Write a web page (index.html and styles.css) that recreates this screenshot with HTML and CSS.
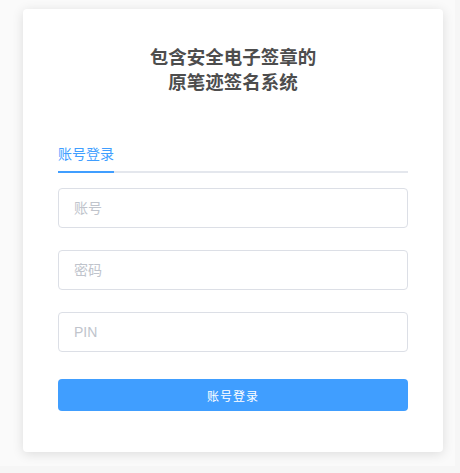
FILE: index.html
```html
<!DOCTYPE html>
<html lang="zh-CN">
<head>
    <meta charset="UTF-8">
    <meta name="viewport" content="width=device-width, initial-scale=1.0">
    <title>登录</title>
    <link rel="stylesheet" href="styles.css">
</head>
<body>
    <div class="page">
        <div class="login-card">
            <h1 class="login-title">包含安全电子签章的<br>原笔迹签名系统</h1>

            <div class="tabs">
                <div class="tab active">账号登录</div>
            </div>

            <form class="login-form">
                <input class="field" type="text" placeholder="账号">
                <input class="field" type="password" placeholder="密码">
                <input class="field" type="text" placeholder="PIN">
                <button class="submit" type="button">账号登录</button>
            </form>
        </div>
    </div>
</body>
</html>
```

FILE: styles.css
```css
* {
    margin: 0;
    padding: 0;
    box-sizing: border-box;
}

body {
    font-family: "Liberation Sans", "Noto Sans CJK SC", sans-serif;
    background-color: #f6f6f6;
    width: 460px;
    height: 473px;
    overflow: hidden;
}

.page {
    width: 455px;
    height: 466px;
    background: #fafafa;
    padding: 9px 0 0 23px;
}

.login-card {
    width: 420px;
    background: #fff;
    border-radius: 4px;
    box-shadow: 0 2px 12px rgba(0, 0, 0, 0.12);
    padding: 36px 35px 41px;
}

.login-title {
    font-size: 18.5px;
    font-weight: 700;
    line-height: 25px;
    text-align: center;
    color: #4d4d4d;
    margin-bottom: 48px;
}

.tabs {
    display: flex;
    border-bottom: 2px solid #e4e7ed;
    margin-bottom: 15px;
}

.tab {
    font-size: 14px;
    line-height: 22px;
    padding-bottom: 6px;
    color: #606266;
    margin-bottom: -2px;
    border-bottom: 2px solid transparent;
}

.tab.active {
    color: #409eff;
    border-bottom-color: #409eff;
}

.login-form {
    display: flex;
    flex-direction: column;
    gap: 22px;
}

.field {
    height: 40px;
    width: 100%;
    border: 1px solid #dcdfe6;
    border-radius: 4px;
    padding: 0 15px;
    font-family: inherit;
    font-size: 14px;
    color: #606266;
    outline: none;
}

.field::placeholder {
    color: #c0c4cc;
}

.submit {
    height: 32px;
    margin-top: 5px;
    border: none;
    border-radius: 4px;
    background: #409eff;
    color: #fff;
    font-family: inherit;
    font-size: 12px;
    letter-spacing: 1px;
}
```
